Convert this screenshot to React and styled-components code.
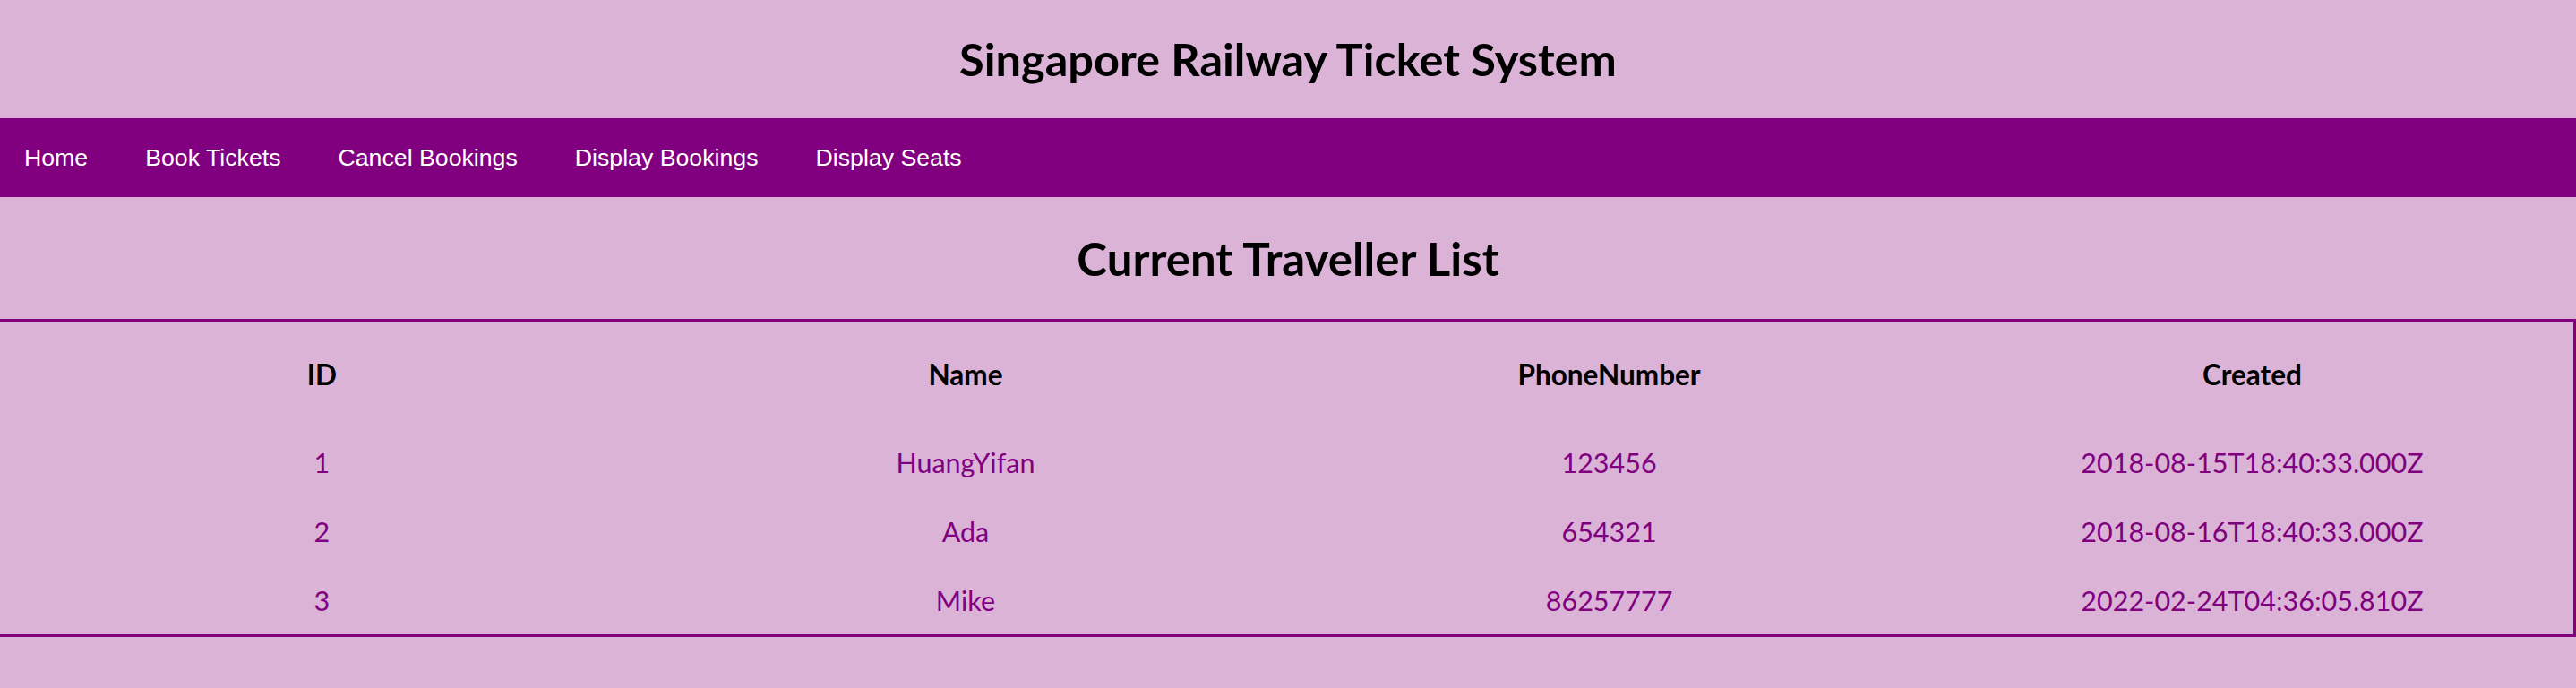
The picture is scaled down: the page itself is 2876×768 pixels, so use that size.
import React from 'react';
import styled, { createGlobalStyle } from 'styled-components';

const GlobalStyle = createGlobalStyle`
  html, body {
    margin: 0;
    padding: 0;
    background: #dab3d6;
  }
  body {
    font-family: Lato, "Open Sans", sans-serif;
  }
`

const Page = styled.div`
  min-height: 768px;
  background: #dab3d6;
`

const Header = styled.header`
  height: 132px;
  display: flex;
  align-items: center;
  justify-content: center;
`

const Title = styled.h1`
  margin: 0 0 2px;
  font-size: 50.5px;
  font-weight: 700;
  color: #000;
`

const Nav = styled.nav`
  height: 88px;
  background: #800080;
  display: flex;
  align-items: center;
  gap: 64px;
  padding-left: 27px;
`

const NavLink = styled.a`
  font-family: "Liberation Sans", Arial, sans-serif;
  font-size: 26.7px;
  color: #fff;
  text-decoration: none;
  cursor: pointer;
`

const SectionTitle = styled.h2`
  margin: 0;
  height: 136px;
  display: flex;
  align-items: center;
  justify-content: center;
  font-size: 51px;
  font-weight: 700;
  color: #000;
`

const Table = styled.table`
  width: 100%;
  border-collapse: collapse;
  table-layout: fixed;
  border-top: 3px solid #800080;
  border-right: 3px solid #800080;
  border-bottom: 3px solid #800080;
`

const HeadCell = styled.th`
  height: 118px;
  padding: 0;
  text-align: center;
  font-size: 31.5px;
  font-weight: 700;
  color: #000;
`

const Cell = styled.td`
  height: 77px;
  padding: 0;
  text-align: center;
  font-size: 30.5px;
  color: #800080;
`

const travellers = [
  { id: 1, name: 'HuangYifan', phone: '123456', created: '2018-08-15T18:40:33.000Z' },
  { id: 2, name: 'Ada', phone: '654321', created: '2018-08-16T18:40:33.000Z' },
  { id: 3, name: 'Mike', phone: '86257777', created: '2022-02-24T04:36:05.810Z' },
]

const links = ['Home', 'Book Tickets', 'Cancel Bookings', 'Display Bookings', 'Display Seats']

export default function App() {
  return (
    <Page>
      <GlobalStyle />
      <Header>
        <Title>Singapore Railway Ticket System</Title>
      </Header>
      <Nav>
        {links.map((l) => (
          <NavLink key={l}>{l}</NavLink>
        ))}
      </Nav>
      <SectionTitle>Current Traveller List</SectionTitle>
      <Table>
        <thead>
          <tr>
            <HeadCell>ID</HeadCell>
            <HeadCell>Name</HeadCell>
            <HeadCell>PhoneNumber</HeadCell>
            <HeadCell>Created</HeadCell>
          </tr>
        </thead>
        <tbody>
          {travellers.map((t) => (
            <tr key={t.id}>
              <Cell>{t.id}</Cell>
              <Cell>{t.name}</Cell>
              <Cell>{t.phone}</Cell>
              <Cell>{t.created}</Cell>
            </tr>
          ))}
        </tbody>
      </Table>
    </Page>
  )
}
